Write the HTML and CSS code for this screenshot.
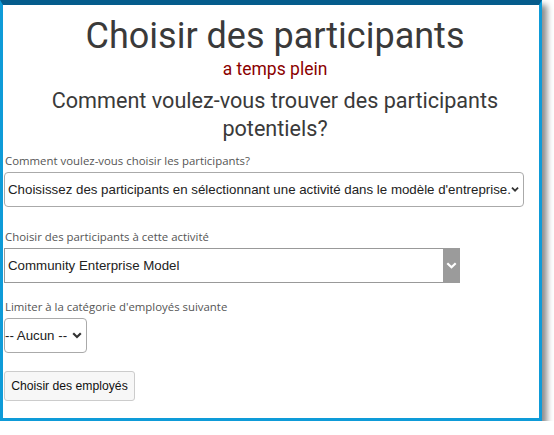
FILE: index.html
```html
<!DOCTYPE html>
<html lang="fr">
<head>
    <meta charset="UTF-8">
    <meta name="viewport" content="width=device-width, initial-scale=1.0">
    <title>Choisir des participants</title>
    <link rel="stylesheet" href="styles.css">
</head>
<body>

    <!-- Dialog Frame -->
    <div class="frame">

        <!-- Headings -->
        <h1 class="title">Choisir des participants</h1>
        <div class="subtitle">a temps plein</div>
        <h2 class="question">Comment voulez-vous trouver des participants potentiels?</h2>

        <!-- How to choose -->
        <div class="field field-first">
            <div class="field-label">Comment voulez-vous choisir les participants?</div>
            <div class="select select-rounded select-wide">
                <span class="select-text">Choisissez des participants en sélectionnant une activité dans le modèle d'entreprise.</span>
                <svg class="chevron" width="10" height="7" viewBox="0 0 10 7"><path d="M1.2 1.3 5 5 8.8 1.3" fill="none" stroke="#333" stroke-width="2.2"/></svg>
            </div>
        </div>

        <!-- Activity -->
        <div class="field field-second">
            <div class="field-label">Choisir des participants à cette activité</div>
            <div class="select select-square">
                <span class="select-text">Community Enterprise Model</span>
                <span class="arrow-block">
                    <svg width="11" height="7" viewBox="0 0 11 7"><path d="M1.3 1.3 5.5 5.3 9.7 1.3" fill="none" stroke="#fff" stroke-width="2.2"/></svg>
                </span>
            </div>
        </div>

        <!-- Category -->
        <div class="field field-third">
            <div class="field-label">Limiter à la catégorie d'employés suivante</div>
            <div class="select select-rounded select-small">
                <span class="select-text">-- Aucun --</span>
                <svg class="chevron" width="10" height="7" viewBox="0 0 10 7"><path d="M1.2 1.3 5 5 8.8 1.3" fill="none" stroke="#333" stroke-width="2.2"/></svg>
            </div>
        </div>

        <button class="btn">Choisir des employés</button>
    </div>

</body>
</html>
```

FILE: styles.css
```css
/* Page */
body {
    margin: 0;
    padding: 0;
    background-color: #ffffff;
    font-family: 'Liberation Sans', Arial, sans-serif;
}

/* Dialog Frame */
.frame {
    width: 535px;
    height: 413px;
    background-color: #ffffff;
    border: 3px solid #0e9bd8;
    border-top: 5px solid #055c8c;
    box-shadow: 5px 5px 6px rgba(0, 0, 0, 0.45);
    padding: 0 0 0 1px;
    box-sizing: content-box;
}

/* Headings */
.title {
    font-family: 'Roboto', sans-serif;
    font-weight: 400;
    font-size: 36px;
    line-height: 42px;
    color: #3a3a3a;
    text-align: center;
    margin: 10px 0 0;
    padding-left: 7px;
}

.subtitle {
    font-family: 'Roboto', sans-serif;
    font-size: 17.5px;
    line-height: 21px;
    color: #8b0000;
    text-align: center;
    margin-top: 2px;
    padding-left: 7px;
}

.question {
    font-family: 'Roboto', sans-serif;
    font-weight: 400;
    font-size: 21.6px;
    line-height: 28px;
    color: #3a3a3a;
    text-align: center;
    margin: 7px 0 0;
    padding-left: 7px;
}

/* Fields */
.field {
    display: flex;
    flex-direction: column;
    align-items: flex-start;
}

.field-first {
    margin-top: 10px;
}

.field-second {
    margin-top: 22px;
}

.field-third {
    margin-top: 16px;
}

.field-label {
    font-family: 'Open Sans', sans-serif;
    font-size: 11.4px;
    line-height: 16px;
    color: #555555;
    padding-left: 1px;
    margin-bottom: 3px;
}

/* Select boxes */
.select {
    display: flex;
    align-items: center;
    height: 35px;
    box-sizing: border-box;
    border: 1px solid #aaaaaa;
    background-color: #ffffff;
    color: #222222;
    font-size: 13.3px;
}

.select-text {
    flex: 1;
    white-space: nowrap;
    padding-left: 3px;
}

.select-rounded {
    border-radius: 4px;
}

.select-wide {
    width: 520px;
}

.select-small {
    width: 83px;
    padding-right: 4px;
}

.select-wide .chevron {
    margin-right: 4px;
}

.select-small .select-text {
    padding-left: 0;
}

.select-square {
    width: 456px;
    border-color: #999999;
    border-right: none;
}

.arrow-block {
    align-self: stretch;
    width: 17px;
    margin: -1px 0;
    background-color: #9b9b9b;
    display: flex;
    align-items: center;
    justify-content: center;
}

/* Button */
.btn {
    margin-top: 18px;
    width: 131px;
    height: 30px;
    background-color: #f7f7f7;
    border: 1px solid #cccccc;
    border-radius: 3px;
    font-family: 'Liberation Sans', Arial, sans-serif;
    font-size: 12.2px;
    color: #111111;
    padding: 0;
}
```
